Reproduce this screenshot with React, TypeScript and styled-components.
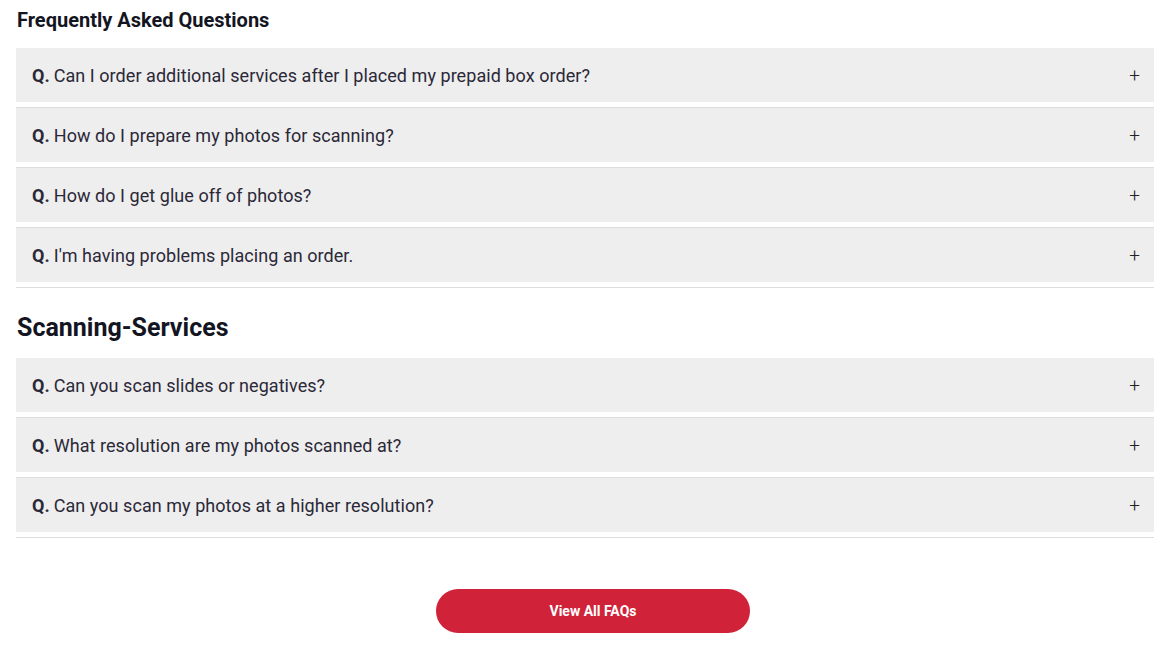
import React from "react";
import styled, { createGlobalStyle } from "styled-components";

const GlobalStyle = createGlobalStyle`
    body {
        margin: 0;
        background: #ffffff;
        font-family: Roboto, "Liberation Sans", Arial, sans-serif;
    }
`;

const Page = styled.main`
    padding: 8px 10px 0 16px;
    display: flex;
    flex-direction: column;
`;

const Title = styled.h2`
    margin: 0 0 16px 1px;
    font-size: 20px;
    line-height: 24px;
    font-weight: 700;
    color: #141522;
`;

const SectionTitle = styled.h2`
    margin: 26px 0 16px 1px;
    font-size: 25px;
    line-height: 28px;
    font-weight: 700;
    color: #141522;
`;

const List = styled.ul`
    list-style: none;
    margin: 0;
    padding: 0;
    display: flex;
    flex-direction: column;
`;

const Item = styled.li`
    padding-bottom: 5px;
    border-bottom: 1px solid #dddddd;
`;

const Question = styled.button`
    width: 100%;
    height: 54px;
    display: flex;
    align-items: center;
    justify-content: space-between;
    padding: 0 16px;
    border: none;
    background: #eeeeee;
    font-family: inherit;
    font-size: 18px;
    letter-spacing: 0.05px;
    color: #2b2838;
    text-align: left;
    cursor: pointer;
`;

const Q = styled.strong`
    font-weight: 700;
    margin-right: 4px;
`;

const Plus = styled.span`
    font-size: 19px;
    font-weight: 300;
    color: #222;
    margin-right: -2px;
`;

const ButtonRow = styled.div`
    display: flex;
    justify-content: center;
    padding: 51px 0 20px;
`;

const ViewAll = styled.a`
    width: 314px;
    height: 44px;
    border-radius: 22px;
    background: #d02339;
    color: #ffffff;
    font-size: 14px;
    font-weight: 700;
    display: flex;
    align-items: center;
    justify-content: center;
    text-decoration: none;
    margin-left: 16px;
`;

const general = [
    "Can I order additional services after I placed my prepaid box order?",
    "How do I prepare my photos for scanning?",
    "How do I get glue off of photos?",
    "I'm having problems placing an order.",
];

const scanning = [
    "Can you scan slides or negatives?",
    "What resolution are my photos scanned at?",
    "Can you scan my photos at a higher resolution?",
];

const FaqList: React.FC<{ items: string[] }> = ({ items }) => (
    <List>
        {items.map((q) => (
            <Item key={q}>
                <Question>
                    <span>
                        <Q>Q.</Q>
                        {q}
                    </span>
                    <Plus>+</Plus>
                </Question>
            </Item>
        ))}
    </List>
);

export default function App() {
    return (
        <>
            <GlobalStyle />
            <Page>
                <Title>Frequently Asked Questions</Title>
                <FaqList items={general} />
                <SectionTitle>Scanning-Services</SectionTitle>
                <FaqList items={scanning} />
                <ButtonRow>
                    <ViewAll href="#">View All FAQs</ViewAll>
                </ButtonRow>
            </Page>
        </>
    );
}
